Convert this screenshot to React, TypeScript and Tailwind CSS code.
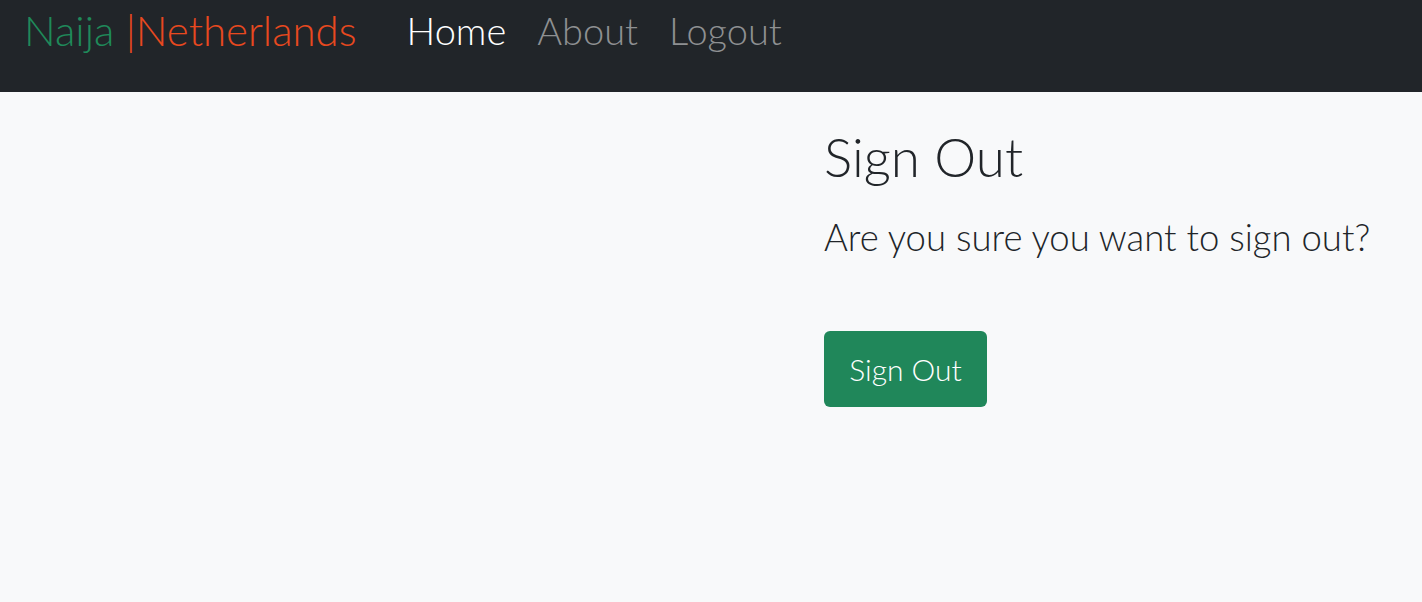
import React from 'react'

const App = () => {
    return (
        <div className="min-h-[602px] bg-[#f8f9fa] font-['Lato',sans-serif] font-light">
            {/* navbar */}
            <nav className="h-[92px] bg-[#212529] flex items-start px-[24px] pt-[4px]">
                <a className="text-[42px] leading-[52px] mr-[50px]">
                    <span className="text-[#1f8a5a]">Naija </span>
                    <span className="text-[#e8491f]">|Netherlands</span>
                </a>
                <div className="flex gap-[31px] text-[38px] leading-[52px]">
                    <a className="text-white">Home</a>
                    <a className="text-[#8e9092]">About</a>
                    <a className="text-[#8e9092]">Logout</a>
                </div>
            </nav>

            {/* content */}
            <div className="grid grid-cols-[824px_1fr]">
                <div></div>
                <div className="pt-[33px] flex flex-col items-start">
                    <h1 className="text-[53px] leading-[63px] text-[#212529]">Sign Out</h1>
                    <p className="text-[36.5px] leading-[44px] text-[#212529] mt-[27px]">Are you sure you want to sign out?</p>
                    <button className="mt-[72px] w-[163px] h-[76px] rounded-[6px] bg-[#20875a] text-white text-[30px]">Sign Out</button>
                </div>
            </div>
        </div>
    )
}

export default App
